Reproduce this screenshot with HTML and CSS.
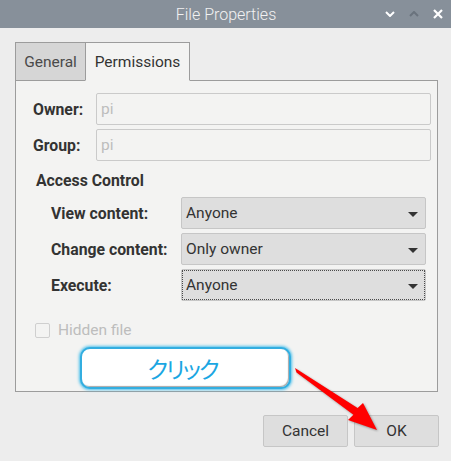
FILE: index.html
```html
<!DOCTYPE html>
<html lang="en">
<head>
<meta charset="utf-8">
<title>File Properties</title>
<link rel="stylesheet" href="styles.css">
</head>
<body>
<div class="window">
  <header class="titlebar">
    <span class="title">File Properties</span>
    <div class="controls">
      <svg class="ctl" width="10" height="6" viewBox="0 0 10 6"><path d="M1 1 L5 5 L9 1" fill="none" stroke="#ffffff" stroke-width="2"/></svg>
      <svg class="ctl up" width="10" height="6" viewBox="0 0 10 6"><path d="M1 5 L5 1 L9 5" fill="none" stroke="#6a737d" stroke-width="2"/></svg>
      <svg class="ctl x" width="10" height="10" viewBox="0 0 10 10"><path d="M1 1 L9 9 M9 1 L1 9" fill="none" stroke="#ffffff" stroke-width="2.2"/></svg>
    </div>
  </header>
  <main class="dialog">
    <div class="tabs">
      <div class="tab tab-inactive">General</div>
      <div class="tab tab-active">Permissions</div>
    </div>
    <section class="panel">
      <div class="owner-grid">
        <label class="lbl">Owner:</label>
        <div class="entry">pi</div>
        <label class="lbl">Group:</label>
        <div class="entry">pi</div>
      </div>
      <h3 class="heading">Access Control</h3>
      <div class="access-grid">
        <label class="lbl">View content:</label>
        <div class="combo"><span>Anyone</span><i class="caret"></i></div>
        <label class="lbl">Change content:</label>
        <div class="combo"><span>Only owner</span><i class="caret"></i></div>
        <label class="lbl">Execute:</label>
        <div class="combo focused"><span>Anyone</span><i class="caret"></i></div>
      </div>
      <div class="check-row">
        <span class="checkbox"></span>
        <span class="check-label">Hidden file</span>
      </div>
    </section>
    <div class="buttons">
      <button class="btn">Cancel</button>
      <button class="btn">OK</button>
    </div>
  </main>
  <div class="callout">クリック</div>
  <svg class="pointer" width="451" height="461" viewBox="0 0 451 461">
    <polygon points="295,368 357.6,408 363,403 377,430 348,420 353.4,414.8 296.5,372.5" fill="#ff0000"/>
  </svg>
</div>
</body>
</html>
```
FILE: styles.css
```css
* { box-sizing: border-box; }
html, body { margin: 0; padding: 0; }
body {
  width: 451px;
  height: 461px;
  background: #ededed;
  font-family: Roboto, "Noto Sans CJK JP", sans-serif;
  font-size: 15.5px;
  color: #333333;
  overflow: hidden;
}
.window { position: relative; width: 451px; height: 461px; }
.titlebar {
  height: 28px;
  background: #87909a;
  display: flex;
  align-items: center;
  justify-content: center;
  position: relative;
}
.title {
  font-weight: 300;
  font-size: 16px;
  color: #f2f2f2;
  margin-left: 1px;
}
.controls {
  position: absolute;
  right: 8px;
  top: 0;
  height: 28px;
  display: flex;
  align-items: center;
  gap: 14px;
}
.ctl { display: block; }
.dialog {
  padding: 14px 13px 0 15px;
}
.tabs {
  display: flex;
  position: relative;
  z-index: 1;
  margin-bottom: -1px;
}
.tab {
  height: 39px;
  border: 1px solid #9c9c9c;
  display: flex;
  align-items: center;
  justify-content: center;
  font-size: 15.5px;
}
.tab-inactive {
  width: 71px;
  background: #d6d6d6;
  color: #4a4a4a;
  padding-top: 1px;
}
.tab-active {
  width: 105px;
  margin-left: -1px;
  background: #f3f3f2;
  border-bottom-color: #f3f3f2;
  color: #333333;
  padding-top: 1px;
}
.panel {
  height: 312px;
  border: 1px solid #9c9c9c;
  background: #f3f3f2;
  padding: 12px 6px 0 17px;
}
.owner-grid {
  display: grid;
  grid-template-columns: 63px 1fr;
  row-gap: 4px;
  align-items: center;
}
.lbl {
  font-weight: 700;
  font-size: 15.8px;
  color: #333333;
}
.entry {
  height: 32px;
  border: 1px solid #cacaca;
  border-radius: 2px;
  background: #f3f3f2;
  color: #bdbdbd;
  padding: 0 4px;
  display: flex;
  align-items: center;
}
.heading {
  margin: 10px 0 0 3px;
  font-size: 15.8px;
  font-weight: 700;
  line-height: 20px;
  color: #333333;
}
.access-grid {
  display: grid;
  grid-template-columns: 130px 1fr;
  row-gap: 4px;
  align-items: center;
  margin: 6px 5px 0 18px;
}
.combo {
  height: 32px;
  border: 1px solid #c6c6c6;
  border-radius: 2px;
  background: #dedede;
  display: flex;
  align-items: center;
  justify-content: space-between;
  padding: 0 7px 0 4px;
  color: #333333;
}
.combo.focused {
  outline: 1px dotted #4a4a4a;
  outline-offset: -2px;
}
.caret {
  width: 0;
  height: 0;
  border-left: 5px solid transparent;
  border-right: 5px solid transparent;
  border-top: 5px solid #333333;
  margin-top: 2px;
}
.check-row {
  display: flex;
  align-items: center;
  height: 20px;
  margin-top: 19px;
  padding-left: 2px;
}
.checkbox {
  width: 15px;
  height: 15px;
  border: 1px solid #cfcfcf;
  border-radius: 2px;
  background: #f3f3f2;
}
.check-label {
  margin-left: 8px;
  color: #bdbdbd;
}
.buttons {
  display: flex;
  justify-content: flex-end;
  gap: 6px;
  margin: 23px -1px 0 0;
}
.btn {
  width: 85px;
  height: 32px;
  border: 1px solid #c6c6c6;
  border-radius: 2px;
  background: #dedede;
  font-family: Roboto, sans-serif;
  font-size: 15.5px;
  color: #333333;
  padding: 0;
}
.callout {
  position: absolute;
  left: 80px;
  top: 347px;
  width: 211px;
  height: 42px;
  border: 2px solid #33aee0;
  border-radius: 10px;
  background: #ffffff;
  box-shadow: 0 0 3px 1px #4cc0ec, inset -1px -1px 1px rgba(0,0,0,0.35);
  color: #1aa6e2;
  font-family: "Noto Sans CJK JP", sans-serif;
  font-size: 23px;
  font-weight: 400;
  font-feature-settings: "palt";
  line-height: 38px;
  text-align: center;
  letter-spacing: -2px;
  padding-right: 6px;
}
.pointer {
  position: absolute;
  left: 0;
  top: 0;
  pointer-events: none;
  filter: drop-shadow(1px 1px 1px rgba(0,0,0,0.35));
}
```
